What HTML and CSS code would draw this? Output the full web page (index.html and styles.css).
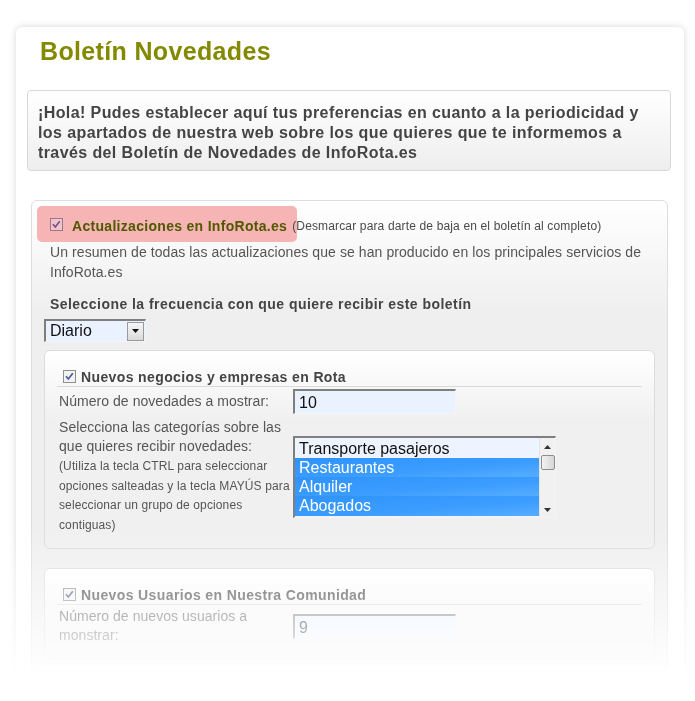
FILE: index.html
```html
<!DOCTYPE html>
<html lang="es">
  <head>
    <meta charset="UTF-8" />
    <meta name="viewport" content="width=device-width, initial-scale=1.0" />
    <title>Boletín Novedades - InfoRota.es</title>
    <link rel="stylesheet" href="styles.css">
  </head>
  <body>
    <div class="page">
      <div class="card">
        <h1 class="title">Boletín Novedades</h1>

        <div class="intro">
          ¡Hola! Pudes establecer aquí tus preferencias en cuanto a la periodicidad y
          los apartados de nuestra web sobre los que quieres que te informemos a
          través del Boletín de Novedades de InfoRota.es
        </div>

        <div class="section">
          <div class="unsub">
            <label class="highlight">
              <svg class="check" width="13" height="13" viewBox="0 0 13 13">
                <rect x="0.5" y="0.5" width="12" height="12" fill="#efc4ca" stroke="#9d7888" />
                <path d="M3 6.3 L5.3 9 L9.8 3.2" fill="none" stroke="#7c4f88" stroke-width="1.7" />
              </svg>
              <span class="unsub-label">Actualizaciones en InfoRota.es</span>
            </label>
            <span class="unsub-note">(Desmarcar para darte de baja en el boletín al completo)</span>
          </div>

          <p class="desc">
            Un resumen de todas las actualizaciones que se han producido en los principales servicios de InfoRota.es
          </p>

          <p class="freq-title">Seleccione la frecuencia con que quiere recibir este boletín</p>

          <div class="select">
            <span class="select-value">Diario</span>
            <span class="select-btn">
              <svg width="7" height="4" viewBox="0 0 7 4"><path d="M0 0 H7 L3.5 4 Z" fill="#111" /></svg>
            </span>
          </div>

          <div class="box">
            <div class="box-head">
              <svg class="check" width="13" height="13" viewBox="0 0 13 13">
                <rect x="0.5" y="0.5" width="12" height="12" fill="#f3f3f3" stroke="#8f8f8f" />
                <path d="M3 6.3 L5.3 9 L9.8 3.2" fill="none" stroke="#4a5a98" stroke-width="1.7" />
              </svg>
              Nuevos negocios y empresas en Rota
            </div>

            <div class="field">
              <div class="field-label">Número de novedades a mostrar:</div>
              <div class="text-input">10</div>
            </div>

            <div class="field">
              <div class="field-label">
                Selecciona las categorías sobre las que quieres recibir novedades:
                <small class="hint">(Utiliza la tecla CTRL para seleccionar opciones salteadas y la tecla MAYÚS para seleccionar un grupo de opciones contiguas)</small>
              </div>
              <div class="listbox">
                <div class="options">
                  <div class="option first">Transporte pasajeros</div>
                  <div class="option selected">Restaurantes</div>
                  <div class="option selected">Alquiler</div>
                  <div class="option selected">Abogados</div>
                </div>
                <div class="scrollbar">
                  <svg width="7" height="4" viewBox="0 0 7 4"><path d="M0 4 H7 L3.5 0 Z" fill="#333" /></svg>
                  <span class="thumb"></span>
                  <span class="track"></span>
                  <svg width="7" height="4" viewBox="0 0 7 4"><path d="M0 0 H7 L3.5 4 Z" fill="#333" /></svg>
                </div>
              </div>
            </div>
          </div>

          <div class="box">
            <div class="box-head">
              <svg class="check" width="13" height="13" viewBox="0 0 13 13">
                <rect x="0.5" y="0.5" width="12" height="12" fill="#f3f3f3" stroke="#8f8f8f" />
                <path d="M3 6.3 L5.3 9 L9.8 3.2" fill="none" stroke="#4a5a98" stroke-width="1.7" />
              </svg>
              Nuevos Usuarios en Nuestra Comunidad
            </div>

            <div class="field">
              <div class="field-label">Número de nuevos usuarios a monstrar:</div>
              <div class="text-input">9</div>
            </div>
          </div>
        </div>
      </div>
    </div>
  </body>
</html>
```

FILE: styles.css
```css
html,
body {
  margin: 0;
  padding: 0;
  overflow: hidden;
  background-color: white;
}
body {
  font-family: "Liberation Sans", Arial, sans-serif;
  color: #555;
}
.page {
  padding: 27px 11px 0 16px;
  -webkit-mask-image: linear-gradient(to bottom, #000 530px, transparent 680px);
  mask-image: linear-gradient(to bottom, #000 530px, transparent 680px);
}
.card {
  padding: 10px 13px 12px 11px;
  background-color: white;
  border-radius: 6px;
  box-shadow: 0 0 7px rgba(0, 0, 0, 0.16);
}
.title {
  margin: 0;
  padding-left: 13px;
  font-size: 25px;
  line-height: 28px;
  letter-spacing: 0.35px;
  font-weight: bold;
  color: #838a00;
}
.intro {
  margin-top: 25px;
  padding: 12px 10px 7px;
  border: 1px solid #d9d9d9;
  border-radius: 4px;
  background: linear-gradient(to bottom, #ffffff, #eeeeee);
  font-size: 16px;
  line-height: 20px;
  letter-spacing: 0.4px;
  font-weight: bold;
  color: #444;
}
.section {
  margin: 29px 3px 0 4px;
  padding: 5px 12px 12px;
  border: 1px solid #dedede;
  border-radius: 6px;
  background: linear-gradient(to bottom, #ffffff, #efefef 110px);
}
.unsub {
  display: flex;
  align-items: center;
  height: 36px;
  margin-left: -7px;
}
.highlight {
  display: flex;
  align-items: center;
  gap: 9px;
  height: 100%;
  padding: 0 10px 0 13px;
  border-radius: 5px;
  background-color: #f7b4b4;
}
.unsub-label {
  font-size: 14px;
  letter-spacing: 0.3px;
  font-weight: bold;
  color: #4f5a00;
  padding-top: 3px;
}
.unsub-note {
  margin-left: -5px;
  padding-top: 4px;
  font-size: 12px;
  letter-spacing: 0.15px;
  color: #4a4a4a;
}
.check {
  display: block;
  flex: none;
}
.desc {
  margin: 0;
  padding-left: 6px;
  font-size: 14px;
  line-height: 20px;
  letter-spacing: 0.08px;
}
.freq-title {
  margin: 12px 0 0;
  padding-left: 6px;
  font-size: 14px;
  line-height: 20px;
  letter-spacing: 0.45px;
  font-weight: bold;
  color: #444;
}
.select {
  display: flex;
  align-items: center;
  justify-content: space-between;
  box-sizing: border-box;
  width: 102px;
  height: 23px;
  margin-top: 5px;
  padding-left: 4px;
  border-top: 2px solid #7f7f7f;
  border-left: 2px solid #7f7f7f;
  border-right: 1px solid #f4f4f4;
  border-bottom: 1px solid #f4f4f4;
  background-color: #eaf2ff;
  font-size: 16px;
  color: #111;
}
.select-btn {
  display: flex;
  align-items: center;
  justify-content: center;
  box-sizing: border-box;
  width: 17px;
  height: 19px;
  margin-right: 1px;
  border: 1px solid #9a9a9a;
  background: linear-gradient(to bottom, #f6f6f6, #dadada);
}
.box {
  margin-top: 8px;
  padding: 16px 12px 13px;
  border: 1px solid #dcdcdc;
  border-radius: 6px;
  background: linear-gradient(to bottom, #ffffff, #f0f0f0 70px);
}
.box + .box {
  margin-top: 19px;
}
.box-head {
  display: flex;
  align-items: center;
  gap: 5px;
  height: 19px;
  padding-left: 6px;
  border-bottom: 1px solid #dadada;
  font-size: 14px;
  letter-spacing: 0.38px;
  font-weight: bold;
  color: #444;
}
.field {
  display: grid;
  grid-template-columns: 236px auto;
  align-items: center;
  margin-top: 4px;
}
.box-head + .field {
  margin-top: 2px;
}
.field-label {
  padding-left: 2px;
  font-size: 14px;
  line-height: 19px;
  letter-spacing: 0.05px;
}
.hint {
  display: block;
  margin-top: 1px;
  font-size: 12px;
  line-height: 19.5px;
  letter-spacing: 0.12px;
}
.text-input {
  box-sizing: border-box;
  width: 163px;
  height: 25px;
  padding: 2px 0 0 4px;
  border-top: 2px solid #7f7f7f;
  border-left: 2px solid #7f7f7f;
  border-right: 1px solid #f4f4f4;
  border-bottom: 1px solid #f4f4f4;
  background-color: #eaf2ff;
  font-size: 16px;
  line-height: 19px;
  color: #111;
}
.listbox {
  display: flex;
  box-sizing: border-box;
  width: 263px;
  height: 82px;
  border-top: 2px solid #7f7f7f;
  border-left: 2px solid #7f7f7f;
  border-right: 1px solid #f4f4f4;
  border-bottom: 1px solid #f4f4f4;
  background-color: #eef4ff;
}
.options {
  flex: 1;
  padding-top: 1px;
}
.option {
  padding-left: 4px;
  font-size: 16px;
  line-height: 19.3px;
  color: #111;
}
.selected {
  color: white;
  background: linear-gradient(to bottom right, #2f93fb, #3c9dff 60%, #55adff);
}
.scrollbar {
  display: flex;
  flex-direction: column;
  align-items: center;
  width: 16px;
  padding: 7px 0 5px;
  box-sizing: border-box;
  background-color: #f1f1f1;
  border-left: 1px solid #e4e4e4;
}
.thumb {
  width: 14px;
  height: 15px;
  margin-top: 6px;
  border: 1px solid #8e8e8e;
  border-radius: 2px;
  box-sizing: border-box;
  background: linear-gradient(to right, #f2f2f2, #d6d6d6);
}
.track {
  flex: 1;
}
```
